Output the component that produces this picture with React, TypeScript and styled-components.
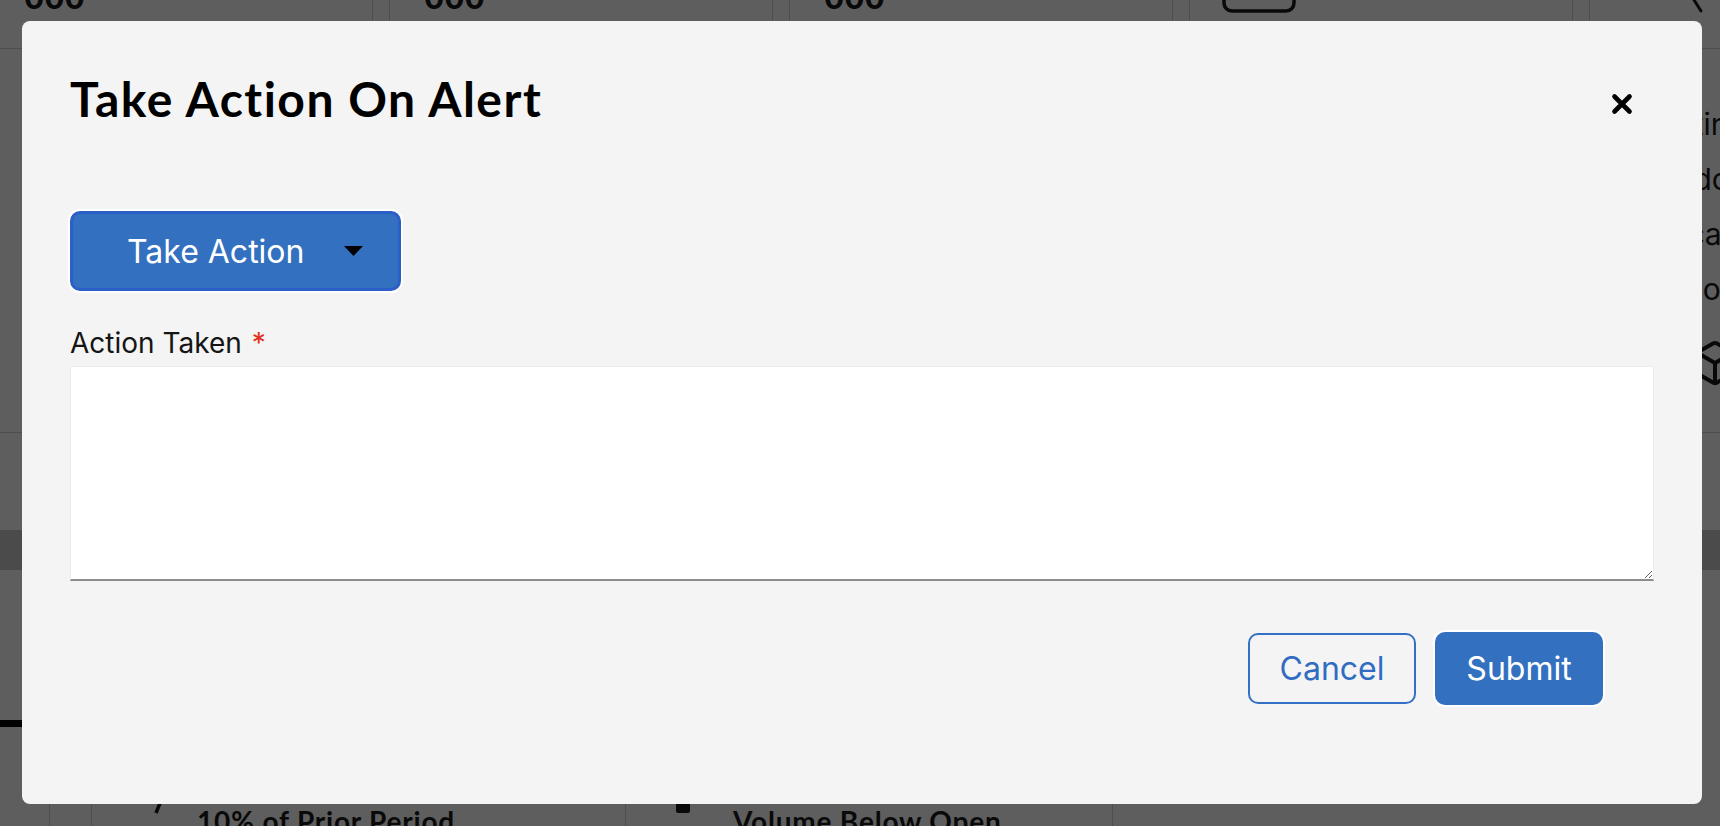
import React from "react";
import styled, { createGlobalStyle } from "styled-components";
import { Box } from "lucide-react";

const GlobalStyle = createGlobalStyle`
  html, body { margin: 0; padding: 0; }
  body {
    font-family: Inter, "Noto Sans", sans-serif;
    background: #ffffff;
    overflow: hidden;
  }
  * { box-sizing: border-box; }
`;

/* ---------- background page (behind the backdrop) ---------- */

const Page = styled.div`
  width: 1720px;
  height: 826px;
  overflow: hidden;
  background: #ffffff;
  color: #151515;
`;

const TopRow = styled.div`
  display: grid;
  grid-template-columns: repeat(5, 384px);
  column-gap: 16px;
  margin: -60px 0 0 -11px;
  height: 109px;
`;

const StatCard = styled.div`
  border: 1px solid #d2d2d2;
  display: flex;
  align-items: flex-end;
  gap: 24px;
  padding: 0 34px 35px;
`;

const StatValue = styled.div`
  font: 700 30px/1 Inter, sans-serif;
  color: #151515;
`;

const StatIcon = styled.svg<{ $shift: number }>`
  display: block;
  margin-left: ${(p) => p.$shift}px;
  margin-bottom: -4px;
`;

const MidRow = styled.div`
  display: flex;
  justify-content: flex-end;
  height: 384px;
  border-bottom: 1px solid #d2d2d2;
`;

const SideCard = styled.div`
  width: 131px;
  padding: 48px 0 0 50px;
  display: flex;
  flex-direction: column;
  white-space: nowrap;
`;

const SideLine = styled.div`
  font: 400 30px/55px Inter, sans-serif;
  color: #151515;
`;

const SideIcon = styled.div`
  margin: 22px 0 0 52px;
  color: #151515;
`;

const Gap = styled.div<{ $h: number }>`
  height: ${(p) => p.$h}px;
`;

const TableHead = styled.div`
  height: 40px;
  background: #c9c9c9;
`;

const ChartArea = styled.div`
  height: 190px;
  padding-top: 150px;
`;

const ChartLine = styled.div`
  width: 420px;
  height: 7px;
  background: #000;
`;

const BottomRow = styled.div`
  display: flex;
  padding-left: 49px;
  height: 66px;
`;

const AlertCard = styled.div<{ $w: number; $closed?: boolean }>`
  width: ${(p) => p.$w}px;
  display: flex;
  border-left: 1px solid #d2d2d2;
  border-right: ${(p) => (p.$closed ? "1px solid #d2d2d2" : "none")};
`;

const Accent = styled.div`
  width: 42px;
  border-right: 1px solid #d2d2d2;
`;

const AlertBody = styled.div<{ $pl: number; $gap: number }>`
  display: flex;
  align-items: flex-start;
  gap: ${(p) => p.$gap}px;
  padding: 25px 0 0 ${(p) => p.$pl}px;
`;

const AlertTitle = styled.div`
  margin-top: 20px;
  font: 700 28px/1.2 Lato, "Noto Sans", sans-serif;
  letter-spacing: 0.8px;
  color: #151515;
  white-space: nowrap;
`;

/* ---------- modal ---------- */

const Backdrop = styled.div`
  position: fixed;
  inset: 0;
  background: rgba(3, 3, 3, 0.64);
  display: flex;
  padding: 21px 18px 22px 22px;
`;

const Modal = styled.div`
  flex: 1;
  background: #f4f4f4;
  border-radius: 8px;
  padding: 49px 48px 0 48px;
  display: flex;
  flex-direction: column;
`;

const Header = styled.div`
  display: flex;
  justify-content: space-between;
  align-items: flex-start;
`;

const Title = styled.h1`
  margin: 0;
  font: 700 48px/58px Lato, "Noto Sans", sans-serif;
  color: #000;
  letter-spacing: 1.5px;
`;

const CloseButton = styled.button`
  margin: 23px 21px 0 0;
  width: 22px;
  height: 22px;
  padding: 0;
  border: none;
  background: transparent;
  cursor: pointer;
  display: flex;
`;

const DropdownToggle = styled.button`
  align-self: flex-start;
  margin-top: 83px;
  width: 331px;
  height: 80px;
  border: 3px solid #2b5ec6;
  border-radius: 10px;
  background: #3371c0;
  box-shadow: 0 0 0 2px #ffffff;
  color: #ffffff;
  font: 400 32px Inter, sans-serif;
  display: flex;
  align-items: center;
  gap: 40px;
  padding: 0 0 0 54px;
  cursor: pointer;
`;

const Caret = styled.svg`
  display: block;
  flex: none;
`;

const Field = styled.div`
  margin-top: 35px;
  display: flex;
  flex-direction: column;
`;

const Label = styled.label`
  font: 400 28px/34px Inter, sans-serif;
  color: #151515;
  margin-bottom: 6px;
`;

const Required = styled.span`
  color: #e0301e;
  margin-left: 10px;
`;

const TextArea = styled.textarea`
  width: 100%;
  height: 215px;
  border: 1px solid #ebebeb;
  border-bottom: 2px solid #8a8d90;
  background: #ffffff;
  resize: vertical;
  font: 400 28px Inter, sans-serif;
  outline: none;
`;

const Footer = styled.div`
  margin-top: 52px;
  padding-right: 51px;
  display: flex;
  justify-content: flex-end;
  align-items: flex-start;
  gap: 19px;
`;

const BaseButton = styled.button`
  font: 400 32px Inter, sans-serif;
  border-radius: 10px;
  cursor: pointer;
  display: flex;
  align-items: center;
  justify-content: center;
`;

const SecondaryButton = styled(BaseButton)`
  width: 168px;
  height: 71px;
  border: 2px solid #3470c4;
  background: transparent;
  color: #2f6cc2;
`;

const PrimaryButton = styled(BaseButton)`
  width: 168px;
  height: 73px;
  margin-top: -1px;
  border: none;
  background: #3371c0;
  box-shadow: 0 0 0 2px #ffffff;
  color: #ffffff;
`;

export default function App() {
  return (
    <>
      <GlobalStyle />
      <Page aria-hidden="true">
        <TopRow>
          <StatCard>
            <StatValue>000</StatValue>
          </StatCard>
          <StatCard>
            <StatValue>000</StatValue>
          </StatCard>
          <StatCard>
            <StatValue>000</StatValue>
          </StatCard>
          <StatCard>
            <StatIcon $shift={-2} width="76" height="44" viewBox="0 0 76 44">
              <rect x="2" y="2" width="70" height="36" rx="8" fill="none" stroke="#151515" strokeWidth="3.5" />
            </StatIcon>
          </StatCard>
          <StatCard>
            <StatIcon $shift={44} width="40" height="44" viewBox="0 0 40 44">
              <circle cx="12" cy="10" r="12" fill="none" stroke="#151515" strokeWidth="3" />
              <line x1="21" y1="19" x2="33" y2="38" stroke="#151515" strokeWidth="3" strokeLinecap="round" />
            </StatIcon>
          </StatCard>
        </TopRow>

        <MidRow>
          <SideCard>
            <SideLine>Routing</SideLine>
            <SideLine>Vendors</SideLine>
            <SideLine>Brocade</SideLine>
            <SideLine>Video</SideLine>
            <SideIcon>
              <Box size={48} strokeWidth={2} />
            </SideIcon>
          </SideCard>
        </MidRow>

        <Gap $h={97} />
        <TableHead />
        <ChartArea>
          <ChartLine />
        </ChartArea>

        <BottomRow>
          <AlertCard $w={576}>
            <Accent />
            <AlertBody $pl={56} $gap={19}>
              <svg width="30" height="30" viewBox="0 0 30 30">
                <path d="M4 10 L10 16 L26 2" fill="none" stroke="#151515" strokeWidth="3.5" />
                <path d="M12 18 L8 28" fill="none" stroke="#151515" strokeWidth="3.5" />
              </svg>
              <AlertTitle>10% of Prior Period</AlertTitle>
            </AlertBody>
          </AlertCard>
          <AlertCard $w={488} $closed>
            <AlertBody $pl={46} $gap={31}>
              <svg width="30" height="30" viewBox="0 0 30 30">
                <rect x="4" y="2" width="14" height="26" rx="2" fill="#151515" />
              </svg>
              <AlertTitle>Volume Below Open</AlertTitle>
            </AlertBody>
          </AlertCard>
        </BottomRow>
      </Page>

      <Backdrop>
        <Modal role="dialog" aria-modal="true" aria-labelledby="take-action-title">
          <Header>
            <Title id="take-action-title">Take Action On Alert</Title>
            <CloseButton aria-label="Close">
              <svg width="22" height="22" viewBox="0 0 22 22">
                <path d="M3.5 3.5 L18.5 18.5 M18.5 3.5 L3.5 18.5" stroke="#000" strokeWidth="4.6" strokeLinecap="round" />
              </svg>
            </CloseButton>
          </Header>

          <DropdownToggle type="button">
            <span>Take Action</span>
            <Caret width="19" height="10" viewBox="0 0 19 10">
              <path d="M0 0 L19 0 L9.5 10 Z" fill="#000" />
            </Caret>
          </DropdownToggle>

          <Field>
            <Label htmlFor="action-taken">
              Action Taken<Required>*</Required>
            </Label>
            <TextArea id="action-taken" />
          </Field>

          <Footer>
            <SecondaryButton type="button">Cancel</SecondaryButton>
            <PrimaryButton type="button">Submit</PrimaryButton>
          </Footer>
        </Modal>
      </Backdrop>
    </>
  );
}
